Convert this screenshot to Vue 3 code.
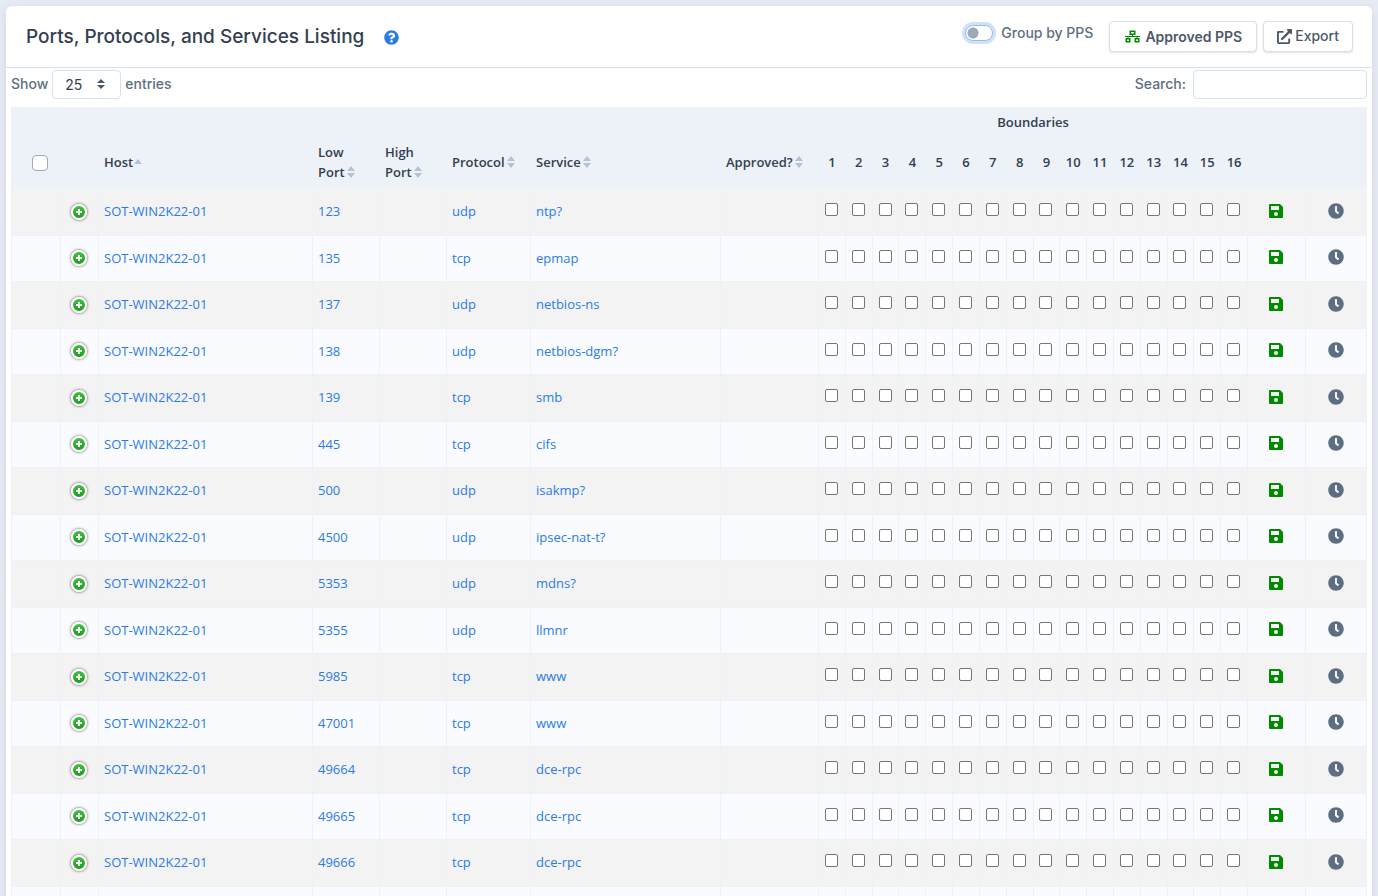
<script setup>
import { ref } from 'vue'

const boundaries = Array.from({ length: 16 }, (_, i) => i + 1)
const sortable = [
  { lead: 'Low', last: 'Port' },
  { lead: 'High', last: 'Port' },
  { lead: '', last: 'Protocol' },
  { lead: '', last: 'Service' },
  { lead: '', last: 'Approved?' },
]
const rows = ref([
  ['123', 'udp', 'ntp?'],
  ['135', 'tcp', 'epmap'],
  ['137', 'udp', 'netbios-ns'],
  ['138', 'udp', 'netbios-dgm?'],
  ['139', 'tcp', 'smb'],
  ['445', 'tcp', 'cifs'],
  ['500', 'udp', 'isakmp?'],
  ['4500', 'udp', 'ipsec-nat-t?'],
  ['5353', 'udp', 'mdns?'],
  ['5355', 'udp', 'llmnr'],
  ['5985', 'tcp', 'www'],
  ['47001', 'tcp', 'www'],
  ['49664', 'tcp', 'dce-rpc'],
  ['49665', 'tcp', 'dce-rpc'],
  ['49666', 'tcp', 'dce-rpc'],
].map(([port, protocol, service]) => ({ host: 'SOT-WIN2K22-01', port, protocol, service })))
const pageSize = ref('25')
const search = ref('')
const grouped = ref(false)
</script>

<template>
  <main class="card">
    <header class="card-header">
      <h1>Ports, Protocols, and Services Listing</h1>
      <button class="plain help" type="button" aria-label="Help">
        <svg viewBox="0 0 512 512" width="15" height="15"><path fill="#2c7be5" d="M504 256c0 137-111 248-248 248S8 393 8 256 119 8 256 8s248 111 248 248zM262.700 90c-54.500 0-89.300 23-116.500 63.800-3.500 5.300-2.400 12.400 2.700 16.300l34.700 26.300c5.200 3.900 12.600 3 16.700-2.100 17.900-22.700 30.100-35.800 57.300-35.800 20.400 0 45.700 13.100 45.700 33 0 15-12.400 22.700-32.500 34C247.100 238.500 216 254.900 216 296v4c0 6.600 5.400 12 12 12h56c6.600 0 12-5.400 12-12v-1.300c0-28.500 83.200-29.600 83.200-106.700 0-58-60.200-102-116.500-102zM256 338c-25.400 0-46 20.600-46 46s20.600 46 46 46 46-20.600 46-46-20.600-46-46-46z" /></svg>
      </button>
      <div class="tools">
        <label class="switch-label" for="group"><input id="group" v-model="grouped" class="switch" type="checkbox">Group by PPS</label>
        <button class="btn strong" type="button">
          <svg viewBox="0 0 15 13" width="15" height="13" fill="none" stroke="#008a00"><path stroke-width="1.500" d="M5.250 1.250h4.500v3h-4.500zM1.250 8.750h3.500v3h-3.500zM10.250 8.750h3.500v3h-3.500z" /><path stroke-width="1" d="M7.500 4.500v2M0 6.500h15M3 6.500v2M12 6.500v2" /></svg>
          Approved PPS
        </button>
        <button class="btn" type="button">
          <svg viewBox="0 0 512 512" width="15" height="15" fill="#4d5969"><path d="M432 320h-32a16 16 0 0 0-16 16v112H64V128h144a16 16 0 0 0 16-16V80a16 16 0 0 0-16-16H48a48 48 0 0 0-48 48v352a48 48 0 0 0 48 48h352a48 48 0 0 0 48-48V336a16 16 0 0 0-16-16zM488 0H360c-21.400 0-32 25.900-17 41l35.700 35.700L135 320.400a24 24 0 0 0 0 34L157.700 377a24 24 0 0 0 34 0l243.600-243.700L471 169c15 15 41 4.500 41-17V24a24 24 0 0 0-24-24z" /></svg>
          Export
        </button>
      </div>
    </header>

    <section class="listing">
      <div class="controls">
        <label for="size">Show</label>
        <div class="select">
          <select id="size" v-model="pageSize"><option>10</option><option>25</option><option>50</option></select>
          <svg viewBox="0 0 8 10" width="8" height="10" fill="#4d5969"><path d="M4 0l4 4H0zM4 10L0 6h8z" /></svg>
        </div>
        <span>entries</span>
        <label class="search" for="search">Search:</label>
        <input id="search" v-model="search" type="search">
      </div>

      <table>
        <colgroup>
          <col class="c-check"><col class="c-expand"><col class="c-host"><col class="c-port"><col class="c-port">
          <col class="c-protocol"><col class="c-service"><col class="c-approved"><col :span="16">
          <col class="c-save"><col class="c-history">
        </colgroup>
        <thead>
          <tr class="group-row">
            <th colspan="8"></th>
            <th class="center" colspan="16">Boundaries</th>
            <th colspan="2"></th>
          </tr>
          <tr class="name-row">
            <th class="center select-all"><input class="check-all" type="checkbox" aria-label="Select all"></th>
            <th></th>
            <th>Host<svg class="sort" viewBox="0 0 8 12" width="8" height="12"><path d="M4 3l4 5H0z" /></svg></th>
            <th v-for="name in sortable" :key="name.lead + name.last">
              {{ name.lead }} <span class="keep">{{ name.last }}<svg class="sort gap" viewBox="0 0 8 12" width="8" height="12"><path d="M4 0l4 5H0zM4 12L0 7h8z" /></svg></span>
            </th>
            <th v-for="n in boundaries" :key="n" class="center">{{ n }}</th>
            <th></th>
            <th></th>
          </tr>
        </thead>
        <tbody>
          <tr v-for="row in rows" :key="row.port">
            <td></td>
            <td class="center"><button class="plain expand" type="button" aria-label="Show details"><svg viewBox="0 0 12 12" width="12" height="12"><path d="M6 3v6M3 6h6" stroke="#fff" stroke-width="2" /></svg></button></td>
            <td><a href="#">{{ row.host }}</a></td>
            <td><a href="#">{{ row.port }}</a></td>
            <td></td>
            <td><a href="#">{{ row.protocol }}</a></td>
            <td><a href="#">{{ row.service }}</a></td>
            <td></td>
            <td v-for="n in boundaries" :key="n" class="center"><input class="boundary" type="checkbox" :aria-label="`Boundary ${n}`"></td>
            <td class="center action">
              <button class="plain" type="button" aria-label="Save"><svg viewBox="0 0 14 14" width="14" height="14"><path fill="#008a00" fill-rule="evenodd" d="M1 0h10l3 3v10a1 1 0 0 1-1 1H1a1 1 0 0 1-1-1V1a1 1 0 0 1 1-1zM2 2v4h8V2zM7 8a2 2 0 1 0 0 4 2 2 0 0 0 0-4z" /></svg></button>
            </td>
            <td class="center action">
              <button class="plain" type="button" aria-label="History"><svg viewBox="0 0 512 512" width="16" height="16"><path fill="#5e6e82" d="M256 8C119 8 8 119 8 256s111 248 248 248 248-111 248-248S393 8 256 8zm92.500 313l-20 25a16 16 0 0 1-22.500 2.500l-67-49.700a40 40 0 0 1-15-31.200V112a16 16 0 0 1 16-16h32a16 16 0 0 1 16 16v144l58 42.500a16 16 0 0 1 2.500 22.500z" /></svg></button>
            </td>
          </tr>
          <tr><td v-for="n in 26" :key="n"></td></tr>
        </tbody>
      </table>
    </section>
  </main>
</template>

<style>
html { overflow: hidden; }
body { margin: 0; background: #e7ebf5; }
</style>

<style scoped>
* { box-sizing: border-box; }
.card {
  margin: 6px 6px 0;
  background: #fff;
  border-radius: 6px;
  box-shadow: 0 3px 12px rgba(65, 69, 88, 0.12);
  font-family: Inter, "Liberation Sans", sans-serif;
  font-size: 14px;
  font-weight: 500;
  color: #5e6e82;
}
svg { display: block; flex: none; }
.card-header {
  display: flex;
  align-items: center;
  height: 62px;
  padding: 0 19px 0 20px;
  border-bottom: 1px solid #d8e2ef;
}
h1 { margin: 0; font-size: 19px; line-height: 24px; font-weight: 500; color: #344050; }
.plain { display: block; padding: 0; border: 0; background: none; }
.help { margin: 2px 0 0 20px; }
.tools { display: flex; align-items: center; margin-left: auto; }
.switch-label { display: flex; align-items: center; gap: 8px; margin: 0 16px 7px 0; line-height: 20px; }
.switch {
  appearance: none;
  width: 28px;
  height: 16px;
  margin: 0;
  border: 1px solid #96bdf2;
  border-radius: 8px;
  background: radial-gradient(circle at 7px 7px, #9da9bb 5px, transparent 6px) #fff;
  box-shadow: 0 0 0 3px #d0e1f9;
}
.btn {
  display: flex;
  align-items: center;
  gap: 3px;
  height: 31px;
  padding: 0 13px 1px;
  border: 1px solid #dcdfe4;
  border-radius: 4px;
  background: #fff;
  box-shadow: 0 1px 2px rgba(0, 0, 0, 0.12);
  font: 500 14px/20px Inter, sans-serif;
  color: #4d5969;
}
.btn + .btn { margin-left: 6px; }
.strong { gap: 5px; padding: 0 14px 0 15px; font-weight: 600; }
.listing { padding: 2px 5px 0; }
.controls { display: flex; align-items: center; gap: 4px; height: 29px; margin-bottom: 8px; line-height: 20px; }
.controls label, .controls span { padding-bottom: 2px; }
.select { position: relative; width: 69px; height: 29px; }
select, #search {
  width: 100%;
  height: 29px;
  margin: 0;
  border: 1px solid #d8e2ef;
  border-radius: 4px;
  background: #fff;
  font: 400 14px/20px Inter, sans-serif;
  color: #344050;
}
select { appearance: none; padding: 0 12px; }
.select svg { position: absolute; right: 16px; top: 9px; pointer-events: none; }
#search { width: 174px; }
.search { margin: 0 3px 0 auto; }
table {
  width: 100%;
  table-layout: fixed;
  border-collapse: separate;
  border-spacing: 0;
  font-family: "Open Sans", "Noto Sans", sans-serif;
  font-size: 13px;
  font-weight: 400;
  line-height: 1.5;
}
.c-check { width: 50px; }
.c-expand { width: 38px; }
.c-host { width: 214px; }
.c-port { width: 67px; }
.c-protocol { width: 84px; }
.c-service { width: 190px; }
.c-approved { width: 98px; }
.c-save { width: 58px; }
.c-history { width: 61px; }
th {
  height: 52px;
  padding: 0 5px;
  background: #edf2f9;
  font-weight: 600;
  line-height: 20px;
  text-align: left;
  color: #344050;
}
.group-row th { height: 30px; }
.name-row th { padding-bottom: 2px; }
td {
  padding: 13px 5px;
  height: 19px;
  border-right: 1px solid #edf2f9;
  border-bottom: 1px solid #edf2f9;
  background: #f9fbff;
}
td:first-child { border-left: 1px solid #edf2f9; }
tbody tr:nth-child(odd) td { background: #f3f3f3; }
tbody tr:nth-child(even) td { background: #f9fbff; }
th.center, td.center { padding-left: 0; padding-right: 1px; text-align: center; }
td.center { padding-top: 0; padding-bottom: 0; }
td.action { padding-bottom: 2px; }
.name-row th.select-all { padding: 0 0 0 8px; }
td .plain { margin: 0 auto; }
a { color: #2c7be5; text-decoration: none; }
.keep { white-space: nowrap; }
.sort { display: inline-block; margin-left: 1px; vertical-align: -1px; fill: #b6c1d2; }
.gap { margin-left: 2px; }
.check-all, .boundary { appearance: none; display: block; margin: 0 auto; background: #fff; }
.check-all { width: 16px; height: 16px; border: 1px solid #9da9bb; border-radius: 4px; }
.boundary { width: 13px; height: 13px; margin-bottom: 4px; border: 1px solid #767676; border-radius: 2px; }
td .expand {
  border: 2px solid #fff;
  border-radius: 50%;
  background: linear-gradient(#3bc43b, #219b21);
  box-shadow: 0 0 3px #444;
}
</style>
